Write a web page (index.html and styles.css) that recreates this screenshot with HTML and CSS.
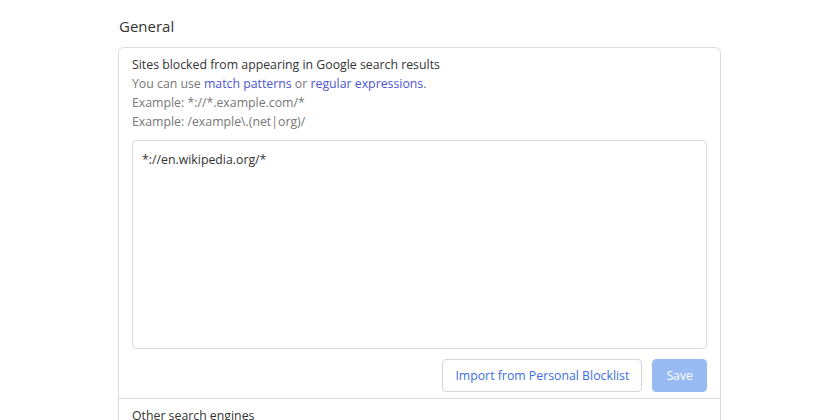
FILE: index.html
```html
<!DOCTYPE html>
<html>
<head>
<meta charset="utf-8">
<link rel="stylesheet" href="styles.css">
</head>
<body>
<main class="page">
  <h2 class="section-title">General</h2>
  <div class="card">
    <div class="item">
      <div class="label">Sites blocked from appearing in Google search results</div>
      <div class="hint">You can use <a class="link" href="#">match patterns</a> or <a class="link" href="#">regular expressions</a>.</div>
      <div class="hint">Example: *://*.example.com/*</div>
      <div class="hint">Example: /example\.(net|org)/</div>
      <textarea class="editor" spellcheck="false">*://en.wikipedia.org/*</textarea>
      <div class="actions">
        <button class="btn btn-secondary">Import from Personal Blocklist</button>
        <button class="btn btn-primary" disabled>Save</button>
      </div>
    </div>
    <div class="item">
      <div class="label">Other search engines</div>
    </div>
  </div>
</main>
</body>
</html>
```
FILE: styles.css
```css
html, body {
  margin: 0;
  padding: 0;
  background: #fff;
}
body {
  font-family: "Open Sans", "Noto Sans", sans-serif;
  font-size: 12.3px;
  line-height: 19px;
  color: #333;
}
.page {
  width: 603px;
  margin: 0 0 0 calc(50% - 302px);
  padding-top: 16px;
}
.section-title {
  margin: 0 0 11px 1px;
  font-size: 15px;
  font-weight: 400;
  line-height: 20px;
  color: #333;
}
.card {
  border: 1px solid #dcdcdc;
  border-radius: 6px;
}
.item {
  padding: 7px 13px 6px;
  border-top: 1px solid #dcdcdc;
}
.item:first-child {
  border-top: none;
}
.label {
  color: #333;
}
.hint {
  color: #777;
}
.link {
  color: #4c56d6;
  text-decoration: none;
}
.editor {
  display: block;
  box-sizing: border-box;
  width: 100%;
  height: 209px;
  margin-top: 9px;
  padding: 9px 9px;
  border: 1px solid #dcdcdc;
  border-radius: 4px;
  font-family: inherit;
  font-size: 12.3px;
  line-height: 19px;
  color: #333;
  resize: none;
  outline: none;
}
.actions {
  display: flex;
  justify-content: flex-end;
  gap: 10px;
  margin-top: 10px;
}
.btn {
  box-sizing: border-box;
  height: 33px;
  border-radius: 4px;
  font-family: inherit;
  font-size: 12.3px;
  padding: 0 12px;
}
.btn-secondary {
  background: #fff;
  border: 1px solid #d6d6d6;
  color: #3d6fe0;
}
.btn-primary {
  background: #98bbf4;
  border: 1px solid #98bbf4;
  color: #fff;
  padding: 0 13px;
}
```
